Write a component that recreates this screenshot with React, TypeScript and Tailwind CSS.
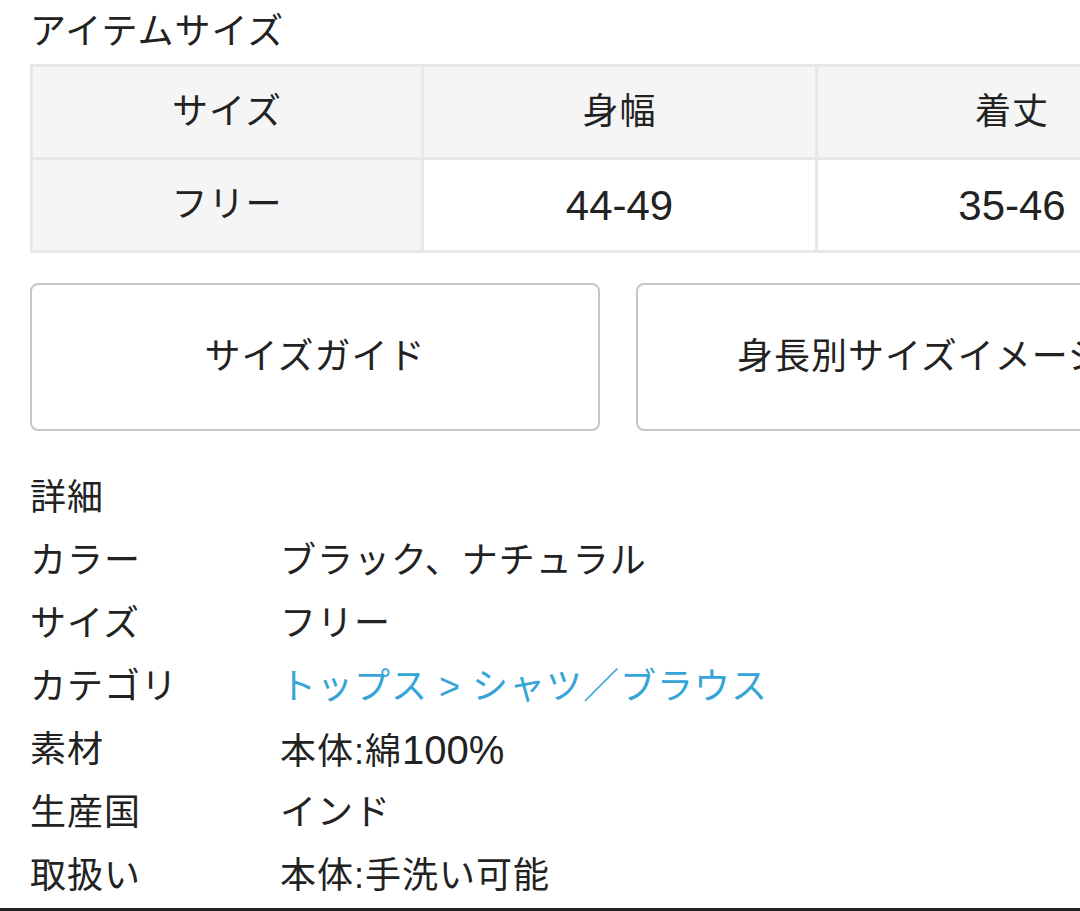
import type { ReactNode } from 'react'

const font = "font-['Liberation_Sans','Noto_Sans_CJK_JP',sans-serif]"

const sizeHeaders = ['サイズ', '身幅', '着丈']
const sizeRow = ['フリー', '44-49', '35-46']

interface DetailRow {
  label: string
  value: ReactNode
  link?: boolean
}

const details: DetailRow[] = [
  { label: 'カラー', value: 'ブラック、ナチュラル' },
  { label: 'サイズ', value: 'フリー' },
  { label: 'カテゴリ', value: 'トップス > シャツ／ブラウス', link: true },
  {
    label: '素材',
    value: (
      <>
        本体:綿<span className="text-[40px] tracking-normal">100%</span>
      </>
    ),
  },
  { label: '生産国', value: 'インド' },
  { label: '取扱い', value: '本体:手洗い可能' },
]

export default function App() {
  return (
    <div
      className={`${font} flex h-[911px] w-[1080px] flex-col overflow-hidden bg-white text-[36px] tracking-[1px] text-[#222222]`}
    >
      <div className="pl-[30px]">
        {/* Title */}
        <h2 className="pt-[14px] pb-[15px] text-[36px] font-normal leading-[35px] whitespace-nowrap">
          アイテムサイズ
        </h2>

        {/* Size table */}
        <div className="grid w-max grid-cols-[388px_391px_388px] gap-[3px] bg-[#e8e8e8] p-[3px]">
          {sizeHeaders.map((h) => (
            <div
              key={h}
              className="flex h-[90px] items-center justify-center bg-[#f5f5f5] whitespace-nowrap"
            >
              {h}
            </div>
          ))}
          {sizeRow.map((v, idx) => (
            <div
              key={v}
              className={`flex h-[90px] items-center justify-center whitespace-nowrap ${
                idx === 0 ? 'bg-[#f5f5f5]' : 'bg-white text-[42px] tracking-normal'
              }`}
            >
              {v}
            </div>
          ))}
        </div>

        {/* Buttons */}
        <div className="mt-[30px] flex w-max gap-[36px]">
          <div className="flex h-[148px] w-[570px] items-center justify-center rounded-[8px] border-2 border-[#c6c6c6] whitespace-nowrap">
            サイズガイド
          </div>
          <div className="flex h-[148px] w-[570px] items-center justify-center rounded-[8px] border-2 border-[#c6c6c6] whitespace-nowrap">
            身長別サイズイメージ
          </div>
        </div>

        {/* Details */}
        <h3 className="mt-[35px] text-[36px] font-normal leading-[63px]">詳細</h3>
        <dl>
          {details.map((row) => (
            <div key={row.label} className="flex h-[63px] items-center whitespace-nowrap">
              <dt className="w-[250px]">{row.label}</dt>
              <dd className={row.link ? 'text-[#34a5d6]' : ''}>{row.value}</dd>
            </div>
          ))}
        </dl>
      </div>

      <div className="mt-auto h-[3px] w-full bg-[#222222]" />
    </div>
  )
}
